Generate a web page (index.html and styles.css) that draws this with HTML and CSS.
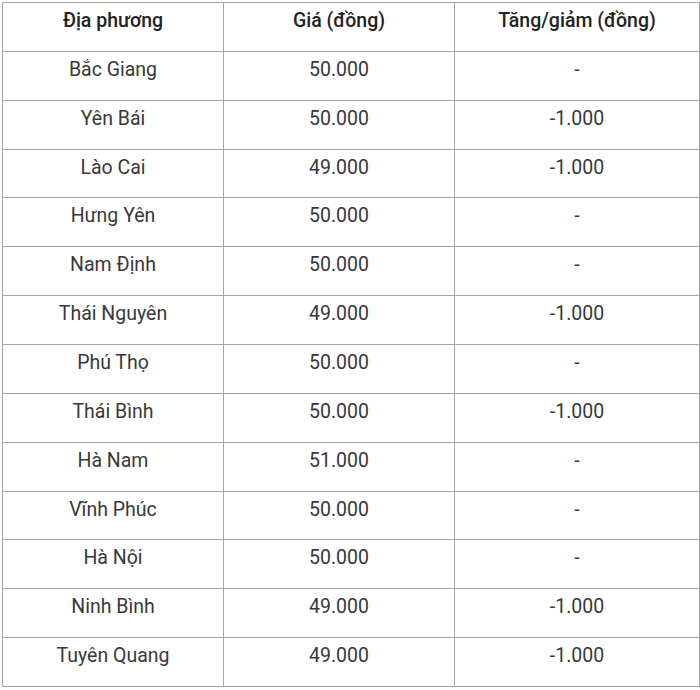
FILE: index.html
```html
<!DOCTYPE html>
<html lang="vi">
<head>
<meta charset="utf-8">
<title>Giá lợn hơi</title>
<link rel="stylesheet" href="styles.css">
</head>
<body>
<table class="price-table">
  <colgroup>
    <col class="c1"><col class="c2"><col class="c3">
  </colgroup>
  <thead>
    <tr><th>Địa phương</th><th>Giá (đồng)</th><th>Tăng/giảm (đồng)</th></tr>
  </thead>
  <tbody>
    <tr><td>Bắc Giang</td><td>50.000</td><td>-</td></tr>
    <tr><td>Yên Bái</td><td>50.000</td><td>-1.000</td></tr>
    <tr><td>Lào Cai</td><td>49.000</td><td>-1.000</td></tr>
    <tr><td>Hưng Yên</td><td>50.000</td><td>-</td></tr>
    <tr><td>Nam Định</td><td>50.000</td><td>-</td></tr>
    <tr><td>Thái Nguyên</td><td>49.000</td><td>-1.000</td></tr>
    <tr><td>Phú Thọ</td><td>50.000</td><td>-</td></tr>
    <tr><td>Thái Bình</td><td>50.000</td><td>-1.000</td></tr>
    <tr><td>Hà Nam</td><td>51.000</td><td>-</td></tr>
    <tr><td>Vĩnh Phúc</td><td>50.000</td><td>-</td></tr>
    <tr><td>Hà Nội</td><td>50.000</td><td>-</td></tr>
    <tr><td>Ninh Bình</td><td>49.000</td><td>-1.000</td></tr>
    <tr><td>Tuyên Quang</td><td>49.000</td><td>-1.000</td></tr>
  </tbody>
</table>
</body>
</html>
```
FILE: styles.css
```css
html, body {
  margin: 0;
  padding: 0;
  background: #ffffff;
}
body {
  padding: 2px 0 0 2px;
  font-family: Roboto, "Noto Sans", "Liberation Sans", sans-serif;
}
.price-table {
  border-collapse: collapse;
  width: 697px;
  table-layout: fixed;
  font-size: 19.5px;
  line-height: 24px;
  color: #383838;
}
.price-table .c1 { width: 221px; }
.price-table .c2 { width: 231px; }
.price-table .c3 { width: 245px; }
.price-table tr {
  height: 48.86px;
}
.price-table th,
.price-table td {
  border: 1px solid #a6a6a6;
  text-align: center;
  vertical-align: top;
  padding: 6px 8px 0;
}
.price-table th {
  font-weight: 500;
  color: #222222;
}
```
